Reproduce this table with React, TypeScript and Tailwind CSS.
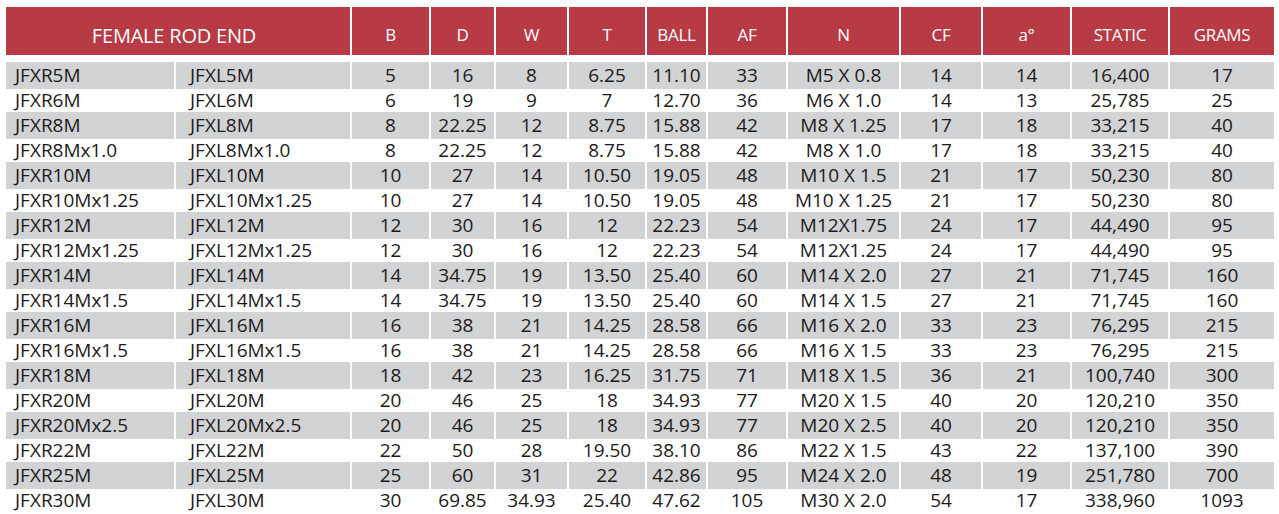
import React from "react";

const rows: string[][] = [
  ["JFXR5M", "JFXL5M", "5", "16", "8", "6.25", "11.10", "33", "M5 X 0.8", "14", "14", "16,400", "17"],
  ["JFXR6M", "JFXL6M", "6", "19", "9", "7", "12.70", "36", "M6 X 1.0", "14", "13", "25,785", "25"],
  ["JFXR8M", "JFXL8M", "8", "22.25", "12", "8.75", "15.88", "42", "M8 X 1.25", "17", "18", "33,215", "40"],
  ["JFXR8Mx1.0", "JFXL8Mx1.0", "8", "22.25", "12", "8.75", "15.88", "42", "M8 X 1.0", "17", "18", "33,215", "40"],
  ["JFXR10M", "JFXL10M", "10", "27", "14", "10.50", "19.05", "48", "M10 X 1.5", "21", "17", "50,230", "80"],
  ["JFXR10Mx1.25", "JFXL10Mx1.25", "10", "27", "14", "10.50", "19.05", "48", "M10 X 1.25", "21", "17", "50,230", "80"],
  ["JFXR12M", "JFXL12M", "12", "30", "16", "12", "22.23", "54", "M12X1.75", "24", "17", "44,490", "95"],
  ["JFXR12Mx1.25", "JFXL12Mx1.25", "12", "30", "16", "12", "22.23", "54", "M12X1.25", "24", "17", "44,490", "95"],
  ["JFXR14M", "JFXL14M", "14", "34.75", "19", "13.50", "25.40", "60", "M14 X 2.0", "27", "21", "71,745", "160"],
  ["JFXR14Mx1.5", "JFXL14Mx1.5", "14", "34.75", "19", "13.50", "25.40", "60", "M14 X 1.5", "27", "21", "71,745", "160"],
  ["JFXR16M", "JFXL16M", "16", "38", "21", "14.25", "28.58", "66", "M16 X 2.0", "33", "23", "76,295", "215"],
  ["JFXR16Mx1.5", "JFXL16Mx1.5", "16", "38", "21", "14.25", "28.58", "66", "M16 X 1.5", "33", "23", "76,295", "215"],
  ["JFXR18M", "JFXL18M", "18", "42", "23", "16.25", "31.75", "71", "M18 X 1.5", "36", "21", "100,740", "300"],
  ["JFXR20M", "JFXL20M", "20", "46", "25", "18", "34.93", "77", "M20 X 1.5", "40", "20", "120,210", "350"],
  ["JFXR20Mx2.5", "JFXL20Mx2.5", "20", "46", "25", "18", "34.93", "77", "M20 X 2.5", "40", "20", "120,210", "350"],
  ["JFXR22M", "JFXL22M", "22", "50", "28", "19.50", "38.10", "86", "M22 X 1.5", "43", "22", "137,100", "390"],
  ["JFXR25M", "JFXL25M", "25", "60", "31", "22", "42.86", "95", "M24 X 2.0", "48", "19", "251,780", "700"],
  ["JFXR30M", "JFXL30M", "30", "69.85", "34.93", "25.40", "47.62", "105", "M30 X 2.0", "54", "17", "338,960", "1093"],
];

const headers = ["B", "D", "W", "T", "BALL", "AF", "N", "CF", "a°", "STATIC", "GRAMS"];

const cols =
  "grid grid-cols-[168px_174px_77px_63px_71px_76px_59px_78px_111px_80px_87px_96px_104px] gap-x-[2px]";

export default function App() {
  return (
    <div
      className="w-[1279px] h-[514px] bg-white overflow-hidden pt-[7px] pl-[6px] text-[#1e1a1b]"
      style={{ fontFamily: '"Open Sans", "Noto Sans", sans-serif' }}
    >
      <div className={`${cols} h-[48px]`}>
        <div className="col-span-2 bg-[#b73a45] text-white text-[20px] tracking-[-0.2px] flex items-center justify-center pt-[9px] pr-[8px]">
          FEMALE ROD END
        </div>
        {headers.map((h) => (
          <div
            key={h}
            className="bg-[#b73a45] text-white text-[17px] tracking-[-0.3px] flex items-center justify-center pt-[8px]"
          >
            {h}
          </div>
        ))}
      </div>
      <div className="mt-[7px] flex flex-col">
        {rows.map((r, i) => {
          const gray = i % 2 === 0;
          return (
            <div key={i} className={`${cols} ${gray ? "h-[27px]" : "h-[23px]"}`}>
              {r.map((c, j) => (
                <div
                  key={j}
                  className={`${gray ? "bg-[#d1d3d4]" : "bg-white"} text-[19px] leading-none flex items-center whitespace-nowrap ${
                    j === 0 ? "pl-[9px]" : j === 1 ? "pl-[14px]" : "justify-center"
                  }`}
                >
                  {c}
                </div>
              ))}
            </div>
          );
        })}
      </div>
    </div>
  );
}
